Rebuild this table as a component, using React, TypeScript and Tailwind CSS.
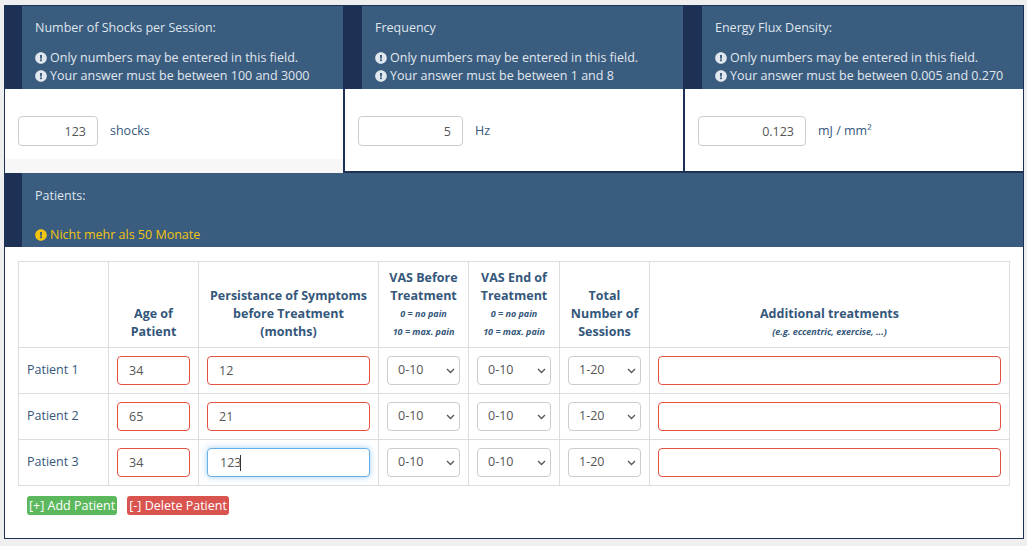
import React from 'react';
import { FaExclamationCircle } from 'react-icons/fa';

const NAVY = 'bg-[#1c3153]';

type Field = {
  title: string;
  range: string;
  value: string;
  unit: string;
  inputWidth: string;
};

const fields: Field[] = [
  { title: 'Number of Shocks per Session:', range: 'Your answer must be between 100 and 3000', value: '123', unit: 'shocks', inputWidth: 'w-[80px]' },
  { title: 'Frequency', range: 'Your answer must be between 1 and 8', value: '5', unit: 'Hz', inputWidth: 'w-[105px]' },
  { title: 'Energy Flux Density:', range: 'Your answer must be between 0.005 and 0.270', value: '0.123', unit: 'mJ / mm²', inputWidth: 'w-[108px]' },
];

const patients = [
  { name: 'Patient 1', age: '34', months: '12' },
  { name: 'Patient 2', age: '65', months: '21' },
  { name: 'Patient 3', age: '34', months: '123', focused: true },
];

function Warning({ text, yellow }: { text: string; yellow?: boolean }) {
  return (
    <div className={`flex items-center gap-[3px] leading-[18px] ${yellow ? 'text-[#f1c40f]' : 'text-[#e1e7ee]'}`}>
      <FaExclamationCircle className="w-[12px] h-[12px]" />
      <span>{text}</span>
    </div>
  );
}

function Select({ value }: { value: string }) {
  return (
    <div className="relative">
      <select
        defaultValue={value}
        className="appearance-none w-full h-[29px] border border-[#ccc] rounded-[4px] bg-white pl-[10px] text-[12.5px] text-[#555] outline-none"
      >
        <option>{value}</option>
      </select>
      <svg className="absolute right-[5px] top-[12px] w-[9px] h-[6px] pointer-events-none" viewBox="0 0 9 6" fill="none">
        <path d="M1 1l3.5 3.5L8 1" stroke="#555" strokeWidth="1.3" />
      </svg>
    </div>
  );
}

function TopPanel({ field, index }: { field: Field; index: number }) {
  const bordered = index > 0;
  return (
    <div className={`flex flex-col ${index === 0 ? 'w-[338px]' : index === 1 ? 'w-[340px]' : 'flex-1'} ${bordered ? 'border-l-2 border-b-2 border-[#1c3153]' : ''}`}>
      <div className="flex h-[83px]">
        <div className={`w-[17px] ${NAVY}`} />
        <div className="flex-1 bg-[#395c7f] pl-[13px] pt-[13px]">
          <div className="leading-[18px] text-[#dfe5ec]">{field.title}</div>
          <div className="mt-[12px]">
            <Warning text="Only numbers may be entered in this field." />
            <Warning text={field.range} />
          </div>
        </div>
      </div>
      <div className={`flex flex-col ${bordered ? 'h-[82px]' : 'h-[84px]'}`}>
        <div className="flex-1 bg-white pl-[13px] pt-[27px]">
          <div className="flex items-center gap-[12px]">
            <input
              defaultValue={field.value}
              className={`${field.inputWidth} h-[30px] border border-[#ccc] rounded-[4px] text-right pr-[11px] text-[12.5px] text-[#555] outline-none`}
            />
            <span className="text-[#34577b]">{field.unit}</span>
          </div>
        </div>
        {index === 0 && <div className="h-[14px] bg-[#f7f7f7]" />}
      </div>
    </div>
  );
}

export default function App() {
  const th = 'border border-[#ddd] align-bottom text-center px-[8px] pt-[7px] pb-[6px] font-bold leading-[18px] text-[#34577b]';
  const td = 'border border-[#ddd] align-middle px-[8px] py-[8px]';
  const small = 'block text-[9px] italic font-bold leading-[18px]';
  const redInput = 'w-full h-[29px] border border-[#e25141] rounded-[4px] pl-[11px] text-[12.5px] text-[#555] outline-none bg-white';

  return (
    <div className="min-h-screen bg-[#efefef] pt-[5px] pl-[4px] pb-[7px] font-['Open_Sans',sans-serif] text-[12.5px]">
      <div className="w-[1020px] border border-[#1c3153] bg-white">
        <div className="flex">
          {fields.map((f, i) => (
            <TopPanel key={f.title} field={f} index={i} />
          ))}
        </div>

        <div className="flex h-[74px]">
          <div className={`w-[17px] ${NAVY}`} />
          <div className="flex-1 bg-[#395c7f] pl-[13px] pt-[14px]">
            <div className="leading-[18px] text-[#dfe5ec]">Patients:</div>
            <div className="mt-[21px]">
              <Warning text="Nicht mehr als 50 Monate" yellow />
            </div>
          </div>
        </div>

        <div className="px-[13px] pt-[14px] pb-[23px]">
          <table className="w-full table-fixed border-collapse">
            <colgroup>
              <col className="w-[90px]" />
              <col className="w-[90px]" />
              <col className="w-[180px]" />
              <col className="w-[90px]" />
              <col className="w-[91px]" />
              <col className="w-[90px]" />
              <col />
            </colgroup>
            <thead>
              <tr>
                <th className={th}></th>
                <th className={th}>Age of Patient</th>
                <th className={th}>Persistance of Symptoms before Treatment (months)</th>
                <th className={th}>
                  VAS Before Treatment
                  <span className={small}>0 = no pain</span>
                  <span className={small}>10 = max. pain</span>
                </th>
                <th className={th}>
                  VAS End of Treatment
                  <span className={small}>0 = no pain</span>
                  <span className={small}>10 = max. pain</span>
                </th>
                <th className={th}>Total Number of Sessions</th>
                <th className={th}>
                  Additional treatments
                  <span className={small}>(e.g. eccentric, exercise, ...)</span>
                </th>
              </tr>
            </thead>
            <tbody>
              {patients.map((p) => (
                <tr key={p.name}>
                  <td className={`${td} text-[#34577b]`}>{p.name}</td>
                  <td className={td}>
                    <input defaultValue={p.age} className={redInput} />
                  </td>
                  <td className={td}>
                    {p.focused ? (
                      <div className="relative">
                        <input
                          defaultValue={p.months}
                          className="w-full h-[29px] border border-[#66afe9] rounded-[4px] pl-[12px] text-[12.5px] text-[#555] outline-none bg-white shadow-[0_0_6px_rgba(102,175,233,0.6)]"
                        />
                        <span className="absolute left-[33px] top-[7px] w-px h-[16px] bg-[#333]" />
                      </div>
                    ) : (
                      <input defaultValue={p.months} className={redInput} />
                    )}
                  </td>
                  <td className={td}>
                    <Select value="0-10" />
                  </td>
                  <td className={td}>
                    <Select value="0-10" />
                  </td>
                  <td className={td}>
                    <Select value="1-20" />
                  </td>
                  <td className={td}>
                    <input className={redInput} />
                  </td>
                </tr>
              ))}
            </tbody>
          </table>

          <div className="flex gap-[10px] mt-[10px] ml-[9px]">
            <button className="h-[19px] px-[2px] rounded-[3px] bg-[#5cb85c] text-white leading-[19px]">[+] Add Patient</button>
            <button className="h-[19px] px-[2px] rounded-[3px] bg-[#d9534f] text-white leading-[19px]">[-] Delete Patient</button>
          </div>
        </div>
      </div>
    </div>
  );
}
